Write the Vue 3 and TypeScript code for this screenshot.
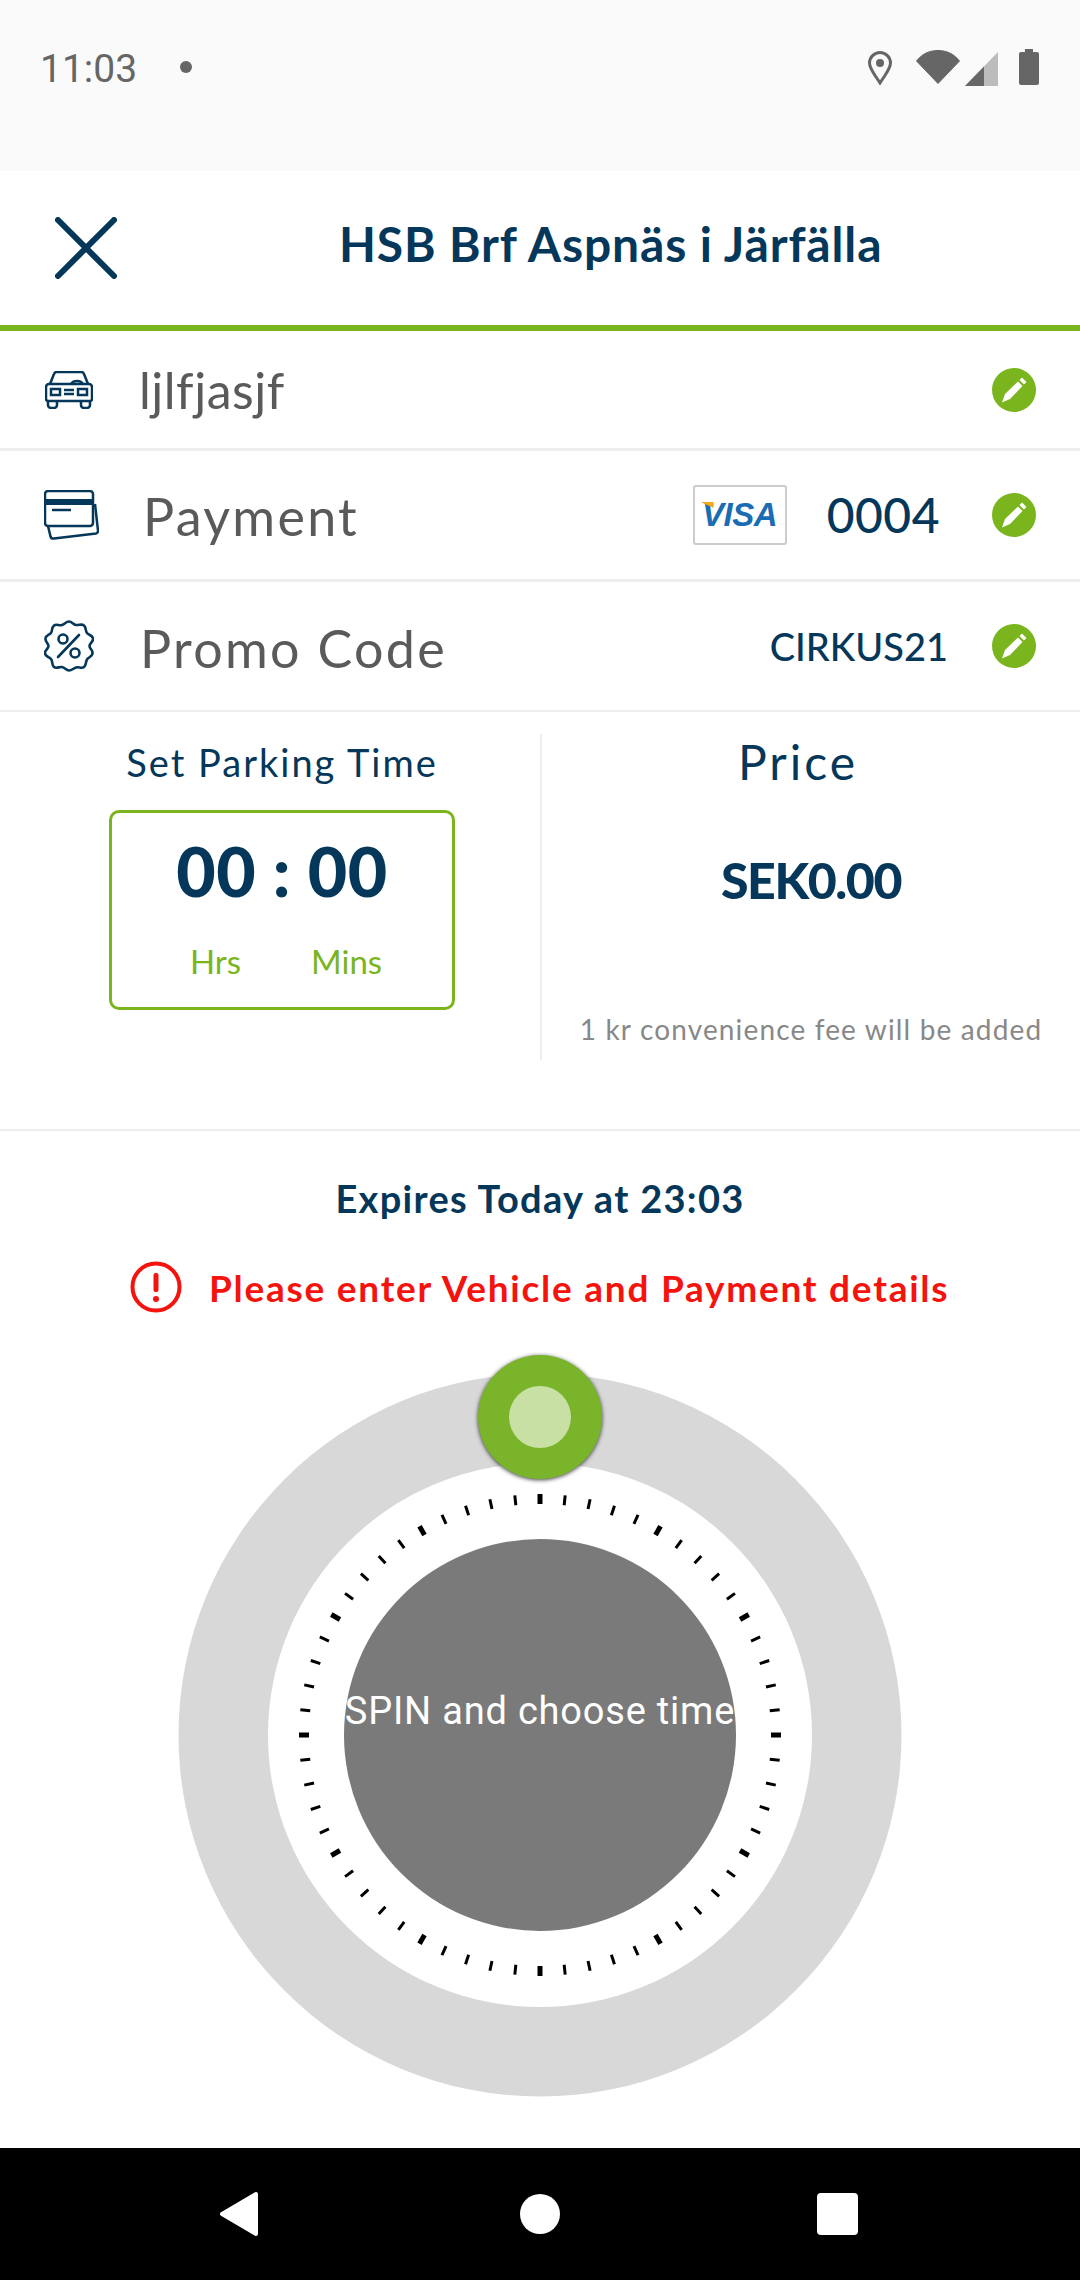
<script setup lang="ts">
interface Tick {
  id: number;
  angle: number;
  major: boolean;
}

const ticks: Tick[] = Array.from({ length: 60 }, (_, i) => ({
  id: i,
  angle: i * 6,
  major: i % 5 === 0,
}));
</script>

<template>
  <div class="screen">
    <div class="status">
      <span class="clock">11:03</span>
      <span class="status-dot"></span>
      <div class="status-icons">
        <svg class="ic-pin" width="26" height="35" viewBox="0 0 26 35">
          <path d="M13 33C8 25 2.500 19 2.500 13a10.500 10.500 0 0 1 21 0C23.500 19 18 25 13 33Z" fill="none" stroke="#666" stroke-width="3" />
          <circle cx="13" cy="13" r="4" fill="#666" />
        </svg>
        <svg class="ic-wifi" width="44" height="34" viewBox="0 0 44 34">
          <path d="M0.500 11C6 4 13 0.500 22 0.500S38 4 43.500 11L22 33.500Z" fill="#666" stroke="#666" stroke-linejoin="round" />
        </svg>
        <svg class="ic-signal" width="33" height="34" viewBox="0 0 33 34">
          <path d="M0 34 33 0V34Z" fill="#bcbcbc" />
          <path d="M0 34 19 14.500V34Z" fill="#666" />
        </svg>
        <svg class="ic-battery" width="20" height="36" viewBox="0 0 20 36">
          <path d="M6 0H14V3H18a2 2 0 0 1 2 2V34a2 2 0 0 1-2 2H2a2 2 0 0 1-2-2V5a2 2 0 0 1 2-2H6Z" fill="#666" />
        </svg>
      </div>
    </div>

    <header class="header">
      <svg class="close" width="62" height="62" viewBox="0 0 62 62">
        <path d="M3 3 59 59M59 3 3 59" stroke="#05375a" stroke-width="6" stroke-linecap="round" fill="none" />
      </svg>
      <h1>HSB Brf Aspnäs i Järfälla</h1>
    </header>

    <div class="row row-vehicle">
      <svg class="row-icon" width="48" height="38" viewBox="0 0 48 38" fill="none" stroke="#05375a" stroke-width="2.500">
        <path d="M5 13 9 3a3 3 0 0 1 3-2H36a3 3 0 0 1 3 2l4 10" />
        <path d="M4 13H44a3 3 0 0 1 3 3V28a2 2 0 0 1-2 2H3a2 2 0 0 1-2-2V16a3 3 0 0 1 3-3Z" />
        <path d="M3 30v4a3 3 0 0 0 3 3h3a3 3 0 0 0 3-3v-4M36 30v4a3 3 0 0 0 3 3h3a3 3 0 0 0 3-3v-4" />
        <rect x="6" y="18" width="9" height="6" />
        <rect x="33" y="18" width="9" height="6" />
        <path d="M19 19H29M19 23H29" />
        <path d="M26 13a7 6 0 0 1 12 0" />
      </svg>
      <span class="row-label vehicle-label">ljlfjasjf</span>
      <span class="edit">
        <svg width="44" height="44" viewBox="0 0 44 44">
          <path d="M10 34.500 13 26 26 13.500 30.500 18 18 31Z" fill="#fff" />
          <path d="M27.500 12 30 9.500 34.500 14 32 16.500Z" fill="#fff" />
        </svg>
      </span>
    </div>

    <div class="row row-payment">
      <svg class="row-icon" width="55" height="50" viewBox="0 0 55 50" fill="none" stroke="#05375a" stroke-width="2.500">
        <rect x="1" y="1" width="48" height="35" rx="3" />
        <rect x="1" y="9" width="48" height="6" fill="#05375a" stroke="none" />
        <path d="M8 20H27" />
        <path d="M4 36 6.500 46.500a3 3 0 0 0 3.500 2L52 43.500a2.500 2.500 0 0 0 2-3L51 14" />
      </svg>
      <span class="row-label payment-label">Payment</span>
      <span class="visa"><span class="visa-corner"></span>VISA</span>
      <span class="card-digits">0004</span>
      <span class="edit">
        <svg width="44" height="44" viewBox="0 0 44 44">
          <path d="M10 34.500 13 26 26 13.500 30.500 18 18 31Z" fill="#fff" />
          <path d="M27.500 12 30 9.500 34.500 14 32 16.500Z" fill="#fff" />
        </svg>
      </span>
    </div>

    <div class="row row-promo">
      <svg class="row-icon" width="50" height="52" viewBox="0 0 50 52" fill="none" stroke="#05375a" stroke-width="2.600">
        <path d="M25 1.500C28 1.500 29 4.500 32 5S37.500 3.500 40 5.500 41 10.500 43 13 48.500 15 49 18.500 45.500 23 45.500 26 49 30 48.500 33.500 44.500 37 43 39.500 42.500 45 40 47 35 46.500 32 47.500 28 50.500 25 50.500 21 47.500 18 47 12.500 49 10 47 9 41.500 7 39 1.500 37 1 33.500 4.500 29 4.500 26 1 22 1.500 18.500 5.500 15 7 13 7.500 7.500 10 5.500 15 6 18 5 22 1.500 25 1.500Z" stroke-linejoin="round" />
        <circle cx="19" cy="19" r="4.500" />
        <circle cx="31" cy="33" r="4.500" />
        <path d="M14 37 35 15" stroke-linecap="round" />
      </svg>
      <span class="row-label promo-label">Promo Code</span>
      <span class="promo-value">CIRKUS21</span>
      <span class="edit">
        <svg width="44" height="44" viewBox="0 0 44 44">
          <path d="M10 34.500 13 26 26 13.500 30.500 18 18 31Z" fill="#fff" />
          <path d="M27.500 12 30 9.500 34.500 14 32 16.500Z" fill="#fff" />
        </svg>
      </span>
    </div>

    <section class="summary">
      <div class="parking">
        <div class="parking-title">Set Parking Time</div>
        <div class="time-box">
          <div class="time-value">00 : 00</div>
          <div class="time-units">
            <span>Hrs</span>
            <span>Mins</span>
          </div>
        </div>
      </div>
      <div class="price">
        <div class="price-title">Price</div>
        <div class="price-value">SEK0.00</div>
        <div class="price-note">1 kr convenience fee will be added</div>
      </div>
    </section>

    <section class="spin">
      <div class="expires">Expires Today at 23:03</div>
      <div class="warning">
        <svg width="52" height="52" viewBox="0 0 52 52">
          <circle cx="26" cy="26" r="23.500" fill="none" stroke="#f5130d" stroke-width="4" />
          <rect x="23.500" y="12" width="5" height="19" rx="2" fill="#f5130d" />
          <circle cx="26" cy="38" r="3" fill="#f5130d" />
        </svg>
        <span>Please enter Vehicle and Payment details</span>
      </div>

      <div class="dial">
        <svg class="dial-face" width="1080" height="808" viewBox="-540 -395 1080 808">
          <circle r="361.500" fill="#d8d8d8" />
          <circle r="272" fill="#fff" />
          <circle r="196" fill="#7a7a7a" />
          <rect
            v-for="t in ticks"
            :key="t.id"
            :x="t.major ? -2.5 : -1.5"
            y="-241"
            :width="t.major ? 5 : 3"
            height="10"
            fill="#000"
            :transform="`rotate(${t.angle})`"
          />
        </svg>
        <div class="dial-label">SPIN and choose time</div>
        <div class="handle"><span class="handle-core"></span></div>
      </div>
    </section>

    <nav class="nav">
      <svg class="nav-back" width="40" height="46" viewBox="0 0 40 46">
        <path d="M37 3V43L3 23Z" fill="#fff" stroke="#fff" stroke-width="4" stroke-linejoin="round" />
      </svg>
      <span class="nav-home"></span>
      <span class="nav-recent"></span>
    </nav>
  </div>
</template>

<style>
html,
body {
  margin: 0;
  background: #fff;
}
</style>

<style scoped>
.screen {
  width: 1080px;
  height: 2280px;
  display: flex;
  flex-direction: column;
  overflow: hidden;
  font-family: Lato, "Liberation Sans", sans-serif;
  font-variant-ligatures: none;
  color: #05375a;
  background: #fff;
}

.status {
  height: 171px;
  flex: none;
  box-sizing: border-box;
  display: flex;
  align-items: flex-start;
  padding: 49px 41px 0 40px;
  background: #fafafa;
}

.clock {
  font-family: Roboto, sans-serif;
  font-size: 39px;
  line-height: 40px;
  color: #666;
}

.status-dot {
  width: 12px;
  height: 12px;
  margin: 12px 0 0 43px;
  border-radius: 50%;
  background: #666;
}

.status-icons {
  margin-left: auto;
  display: flex;
  align-items: flex-start;
}

.ic-pin {
  display: block;
  margin-top: 1px;
}

.ic-wifi {
  display: block;
  margin: 1px 0 0 23px;
}

.ic-signal {
  display: block;
  margin: 3px 0 0 5px;
}

.ic-battery {
  display: block;
  margin-left: 21px;
}

.header {
  height: 160px;
  flex: none;
  box-sizing: border-box;
  display: flex;
  align-items: center;
  border-bottom: 6px solid #7ab51d;
  padding-left: 55px;
}

.close {
  display: block;
  flex: none;
}

.header h1 {
  margin: 0 0 8px 222px;
  font-size: 48px;
  font-weight: 700;
  letter-spacing: 0.85px;
  line-height: 60px;
  white-space: nowrap;
}

.row {
  flex: none;
  box-sizing: border-box;
  display: flex;
  align-items: center;
  padding-right: 44px;
  border-bottom: 3px solid #eee;
}

.row-vehicle {
  height: 120px;
  padding-left: 45px;
}

.row-payment {
  height: 131px;
  padding-left: 44px;
}

.row-promo {
  height: 130px;
  padding-left: 44px;
  border-bottom-width: 2px;
}

.row-icon {
  display: block;
  flex: none;
}

.row-label {
  font-size: 52px;
  letter-spacing: 2.300px;
  line-height: 60px;
  color: #5a5a5a;
}

.vehicle-label {
  margin-left: 46px;
  font-size: 50px;
  letter-spacing: 0.500px;
}

.payment-label {
  margin: 2px 0 0 44px;
}

.promo-label {
  margin: 4px 0 0 46px;
}

.edit {
  width: 44px;
  height: 44px;
  flex: none;
  border-radius: 50%;
  background: #7ab51d;
}

.edit svg {
  display: block;
}

.row-vehicle .edit {
  margin-left: auto;
}

.visa {
  position: relative;
  width: 94px;
  height: 60px;
  flex: none;
  box-sizing: border-box;
  margin-left: auto;
  border: 2px solid #ccc;
  border-radius: 3px;
  text-align: center;
  font-family: "Liberation Sans", sans-serif;
  font-style: italic;
  font-weight: 700;
  font-size: 33px;
  letter-spacing: -0.500px;
  line-height: 56px;
  color: #1a6db3;
}

.visa-corner {
  position: absolute;
  left: 6px;
  top: 15px;
  width: 13px;
  height: 6px;
  background: #f5a81c;
  clip-path: polygon(0 0, 100% 0, 100% 100%);
}

.card-digits {
  margin-left: 40px;
  font-size: 48px;
  font-weight: 500;
  letter-spacing: 0.500px;
  line-height: 60px;
}

.card-digits + .edit {
  margin-left: 52px;
}

.promo-value {
  margin-left: auto;
  font-size: 38px;
  font-weight: 500;
  line-height: 50px;
}

.promo-value + .edit {
  margin-left: 44px;
}

.summary {
  height: 419px;
  flex: none;
  box-sizing: border-box;
  display: flex;
  border-bottom: 2px solid #eee;
}

.parking {
  width: 540px;
  flex: none;
  box-sizing: border-box;
  padding: 28px 0 0 109px;
}

.parking-title {
  width: 346px;
  text-align: center;
  font-size: 38px;
  letter-spacing: 2px;
  line-height: 44px;
  white-space: nowrap;
}

.time-box {
  width: 346px;
  height: 200px;
  box-sizing: border-box;
  margin-top: 26px;
  border: 3px solid #7ab51d;
  border-radius: 10px;
  padding-top: 18px;
  text-align: center;
}

.time-value {
  font-size: 68px;
  font-weight: 900;
  letter-spacing: 0.500px;
  line-height: 80px;
  white-space: nowrap;
}

.time-units {
  display: flex;
  justify-content: center;
  gap: 70px;
  margin-top: 30px;
  padding-left: 8px;
  font-size: 33px;
  line-height: 40px;
  color: #7ab51d;
}

.price {
  width: 538px;
  height: 326px;
  flex: none;
  margin-top: 22px;
  padding-left: 2px;
  border-left: 2px solid #eee;
  box-sizing: border-box;
  text-align: center;
}

.price-title {
  padding-right: 26px;
  font-size: 48px;
  letter-spacing: 3px;
  line-height: 56px;
}

.price-value {
  margin-top: 60px;
  font-size: 50px;
  font-weight: 900;
  letter-spacing: -1.400px;
  line-height: 60px;
}

.price-note {
  margin-top: 102px;
  font-size: 28px;
  letter-spacing: 1.150px;
  line-height: 34px;
  color: #888;
  white-space: nowrap;
}

.spin {
  flex: 1;
  min-height: 0;
  display: flex;
  flex-direction: column;
  align-items: center;
}

.expires {
  margin-top: 44px;
  font-size: 38px;
  font-weight: 700;
  letter-spacing: 1.300px;
  line-height: 46px;
}

.warning {
  display: flex;
  align-items: center;
  align-self: flex-start;
  margin: 38px 0 0 130px;
  color: #f5130d;
  font-size: 37px;
  font-weight: 700;
  letter-spacing: 1.750px;
  line-height: 52px;
  white-space: nowrap;
}

.warning svg {
  display: block;
  flex: none;
  margin-right: 27px;
}

.warning span {
  padding-top: 3px;
}

.dial {
  position: relative;
  width: 1080px;
  flex: 1;
  margin-top: 26px;
}

.dial-face {
  display: block;
}

.dial-label {
  position: absolute;
  left: 0;
  right: 0;
  top: 349px;
  text-align: center;
  font-family: Roboto, sans-serif;
  font-size: 38px;
  letter-spacing: 0.800px;
  line-height: 44px;
  color: #fff;
  white-space: nowrap;
}

.handle {
  position: absolute;
  left: 478px;
  top: 15px;
  width: 124px;
  height: 124px;
  display: grid;
  place-items: center;
  border-radius: 50%;
  background: #7ab42a;
  box-shadow: 0 1px 4px rgba(0, 0, 0, 0.75);
}

.handle-core {
  width: 62px;
  height: 62px;
  border-radius: 50%;
  background: #c8e0a4;
}

.nav {
  height: 132px;
  flex: none;
  box-sizing: border-box;
  display: flex;
  align-items: center;
  padding-left: 219px;
  background: #000;
}

.nav-back {
  display: block;
  flex: none;
}

.nav-home {
  width: 40px;
  height: 40px;
  margin-left: 261px;
  border-radius: 50%;
  background: #fff;
}

.nav-recent {
  width: 41px;
  height: 42px;
  margin-left: 257px;
  border-radius: 4px;
  background: #fff;
}
</style>
